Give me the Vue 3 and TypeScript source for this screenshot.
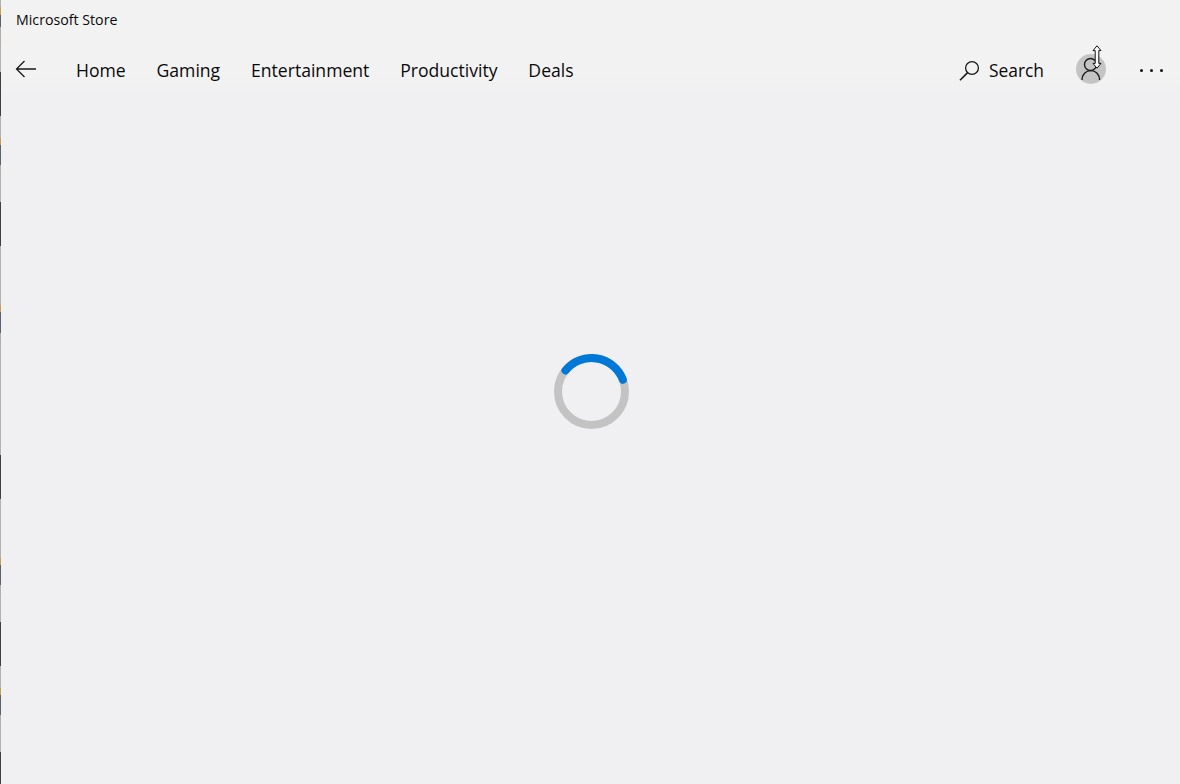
<script setup lang="ts">
const navItems: string[] = ['Home', 'Gaming', 'Entertainment', 'Productivity', 'Deals']

const cx = 37.5
const cy = 37.5
const r = 33.5
const startX = cx + r * Math.cos((Math.PI / 180) * -141)
const startY = cy + r * Math.sin((Math.PI / 180) * -141)
const endX = cx + r * Math.cos((Math.PI / 180) * -20.5)
const endY = cy + r * Math.sin((Math.PI / 180) * -20.5)
const arc = `M${startX} ${startY} A${r} ${r} 0 0 1 ${endX} ${endY}`

const grey = '#b2b2b2'
const orange = '#c99c52'
const mix = '#59626c'
const tan = '#b5aea6'
const dark = '#3c3e48'
const stripe: [string, number][] = [
  [grey, 7], [orange, 8], [mix, 12], [tan, 18], [grey, 27], [dark, 44],
  [grey, 22], [orange, 7], [mix, 20], [tan, 10], [grey, 27], [dark, 44],
  [grey, 59], [orange, 7], [mix, 21], [tan, 9], [grey, 113], [dark, 44],
  [grey, 59], [orange, 7], [mix, 20], [tan, 10], [grey, 27], [dark, 44],
  [grey, 22], [orange, 7], [mix, 20], [tan, 10], [grey, 27], [dark, 32],
]
</script>

<template>
  <div class="window">
    <div class="stripe">
      <i v-for="(s, i) in stripe" :key="i" :style="{ background: s[0], height: s[1] + 'px' }"></i>
    </div>
    <div class="main">
      <div class="titlebar">Microsoft Store</div>
      <header class="nav">
        <svg class="back" width="22" height="18" viewBox="0 0 22 18" fill="none" stroke="#1a1a1a" stroke-width="1.3">
          <path d="M21 9H1.5M9.5 1 1.5 9l8 8" />
        </svg>
        <nav class="links">
          <span v-for="n in navItems" :key="n">{{ n }}</span>
        </nav>
        <div class="tools">
          <div class="search">
            <svg width="21" height="21" viewBox="0 0 21 21" fill="none" stroke="#1a1a1a" stroke-width="1.3">
              <circle cx="13" cy="8" r="6.4" />
              <path d="M8.6 12.6 1 20.2" stroke-width="1.6" />
            </svg>
            <span>Search</span>
          </div>
          <div class="avatar">
            <svg width="20" height="24" viewBox="0 0 20 24" fill="none" stroke="#1a1a1a" stroke-width="1.4">
              <circle cx="9.5" cy="7.5" r="6" />
              <path d="M1 23c0-5.5 3.8-9.4 8.8-9.4s8.8 3.9 8.8 9.4" />
            </svg>
            <svg class="cursor" width="10" height="24" viewBox="0 0 10 24" fill="#fff" stroke="#111" stroke-width="1">
              <path d="M5 .8 9 5.6H6.8v12.8H9L5 23.2 1 18.4h2.2V5.6H1z" />
            </svg>
          </div>
          <div class="more"><i></i><i></i><i></i></div>
        </div>
      </header>
      <div class="content">
        <svg class="spinner" width="75" height="75" viewBox="0 0 75 75" fill="none" stroke-width="8">
          <circle :cx="cx" :cy="cy" :r="r" stroke="#c3c3c3" />
          <path :d="arc" stroke="#0078d7" stroke-linecap="round" />
        </svg>
      </div>
    </div>
  </div>
</template>

<style>
html, body { margin: 0; padding: 0; }
</style>

<style scoped>
.window {
  display: flex;
  width: 1180px;
  height: 784px;
  overflow: hidden;
  background: #f0f0f2;
  color: #0a0a0a;
  font-family: "Open Sans", "Noto Sans", "Liberation Sans", sans-serif;
}
.stripe {
  display: flex;
  flex-direction: column;
  flex: 0 0 1px;
  width: 1px;
}
.stripe i { display: block; flex: none; }
.main {
  flex: 1;
  display: flex;
  flex-direction: column;
  min-width: 0;
}
.titlebar {
  height: 40px;
  line-height: 40px;
  padding-left: 15px;
  font-size: 14.2px;
  background: #f2f2f2;
}
.nav {
  height: 60px;
  display: flex;
  align-items: center;
  background: linear-gradient(#f2f2f2 55%, #f0f0f2);
  padding-left: 15px;
}
.back { flex: none; margin-top: -3px; margin-left: -1px; }
.links {
  display: flex;
  gap: 30.8px;
  margin-left: 39px;
  font-size: 17.6px;
  margin-top: -1px;
}
.tools {
  margin-left: auto;
  display: flex;
  align-items: center;
  padding-right: 16px;
}
.search {
  display: flex;
  align-items: center;
  gap: 9px;
  font-size: 17.4px;
}
.avatar {
  position: relative;
  width: 30px;
  height: 30px;
  border-radius: 50%;
  background: #c4c4c4;
  margin-left: 32px;
  margin-top: -2px;
  display: flex;
  align-items: center;
  justify-content: center;
}
.cursor {
  position: absolute;
  left: 16px;
  top: -9px;
}
.more {
  display: flex;
  gap: 7px;
  margin-left: 33.5px;
  margin-right: 1.5px;
}
.more i {
  display: block;
  width: 3px;
  height: 3px;
  border-radius: 50%;
  background: #111;
}
.content {
  flex: 1;
  display: flex;
  align-items: center;
  justify-content: center;
  padding-bottom: 101px;
}
.spinner { margin-left: 1px; }
</style>
